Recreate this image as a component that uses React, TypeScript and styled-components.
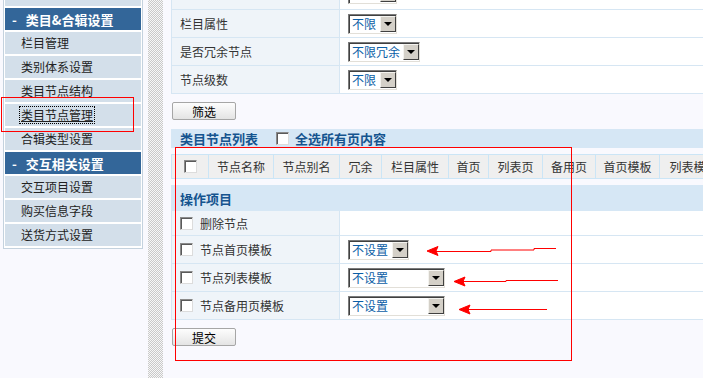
import React from 'react';
import styled, { createGlobalStyle } from 'styled-components';

const GlobalStyle = createGlobalStyle`
  html, body { margin: 0; padding: 0; }
  body {
    background: #f9f9fe;
    font-family: "Noto Sans CJK SC", "Liberation Sans", sans-serif;
    font-size: 12px;
    color: #333;
    overflow: hidden;
  }
`;

const Page = styled.div`
  position: relative;
  display: flex;
  align-items: flex-start;
  width: 703px;
  height: 378px;
  overflow: hidden;
`;

/* ---------- sidebar ---------- */

const Sidebar = styled.div`
  flex-shrink: 0;
  margin-left: 3px;
  width: 140px;
  box-sizing: border-box;
  border: 1px solid #c4d2de;
  border-top: none;
  background: #fff;
  padding: 0 1px 2px;
  display: flex;
  flex-direction: column;
  gap: 2px;
`;

const MenuStub = styled.div`
  height: 6px;
  background: #d3dfea;
`;

const MenuHeader = styled.div`
  height: 22px;
  background: #336699;
  color: #fff;
  font-weight: bold;
  font-size: 13px;
  display: flex;
  align-items: center;
  padding-left: 7px;
  span { margin-right: 9px; }
`;

const MenuItem = styled.div<{ $active?: boolean }>`
  height: 22px;
  background: #d3dfea;
  color: #222;
  display: flex;
  align-items: center;
  padding-left: 15px;
  span {
    padding: 0 1px;
    outline: ${({ $active }) => ($active ? '1px dotted #000' : 'none')};
    text-decoration: ${({ $active }) => ($active ? 'underline' : 'none')};
    line-height: 16px;
  }
`;

const Splitter = styled.div`
  flex-shrink: 0;
  margin-left: 5px;
  width: 15px;
  height: 378px;
  background-color: #fff;
  background-image: repeating-conic-gradient(#c9c9c9 0% 25%, #f7f7f7 0% 50%);
  background-size: 2px 2px;
`;

/* ---------- main ---------- */

const Main = styled.div`
  flex: 1;
  min-width: 0;
  margin-left: 8px;
  height: 378px;
  overflow: hidden;
`;

const FormRow = styled.div<{ $h: number }>`
  box-sizing: border-box;
  display: grid;
  grid-template-columns: 168px 1fr;
  height: ${({ $h }) => $h}px;
  border-left: 1px solid #d6e6f3;
  border-bottom: 1px solid #d6e6f3;
  width: 700px;
`;

const LabelCell = styled.div`
  background: #eff4f9;
  border-right: 1px solid #d6e6f3;
  display: flex;
  align-items: center;
  padding-left: 8px;
  gap: 7px;
  overflow: hidden;
`;

const ValueCell = styled.div<{ $bottom?: boolean }>`
  background: #fff;
  display: flex;
  align-items: ${({ $bottom }) => ($bottom ? 'flex-end' : 'center')};
  padding-left: 8px;
  overflow: hidden;
`;

const SelectBox = styled.div<{ $w: number; $lift?: number }>`
  flex-shrink: 0;
  box-sizing: border-box;
  width: ${({ $w }) => $w}px;
  height: 20px;
  margin-bottom: ${({ $lift }) => $lift ?? 0}px;
  display: flex;
  background: #fff;
  border: 1px solid;
  border-color: #7b7b7b #e2dfd8 #e2dfd8 #7b7b7b;
  box-shadow: inset 1px 1px 0 #404040;
`;

const SelectText = styled.div`
  flex: 1;
  color: #0b5ea6;
  padding-left: 3px;
  line-height: 18px;
  white-space: nowrap;
`;

const SelectArrow = styled.div`
  width: 16px;
  margin: 1px 0 1px 0;
  box-sizing: border-box;
  background: #d4d0c8;
  border: 1px solid;
  border-color: #f4f3ef #404040 #404040 #f4f3ef;
  display: flex;
  align-items: center;
  justify-content: center;
  &::after {
    content: '';
    border-left: 4px solid transparent;
    border-right: 4px solid transparent;
    border-top: 4px solid #000;
  }
`;

const Button = styled.div<{ $top: number; $bottom: number }>`
  margin: ${({ $top, $bottom }) => `${$top}px 0 ${$bottom}px 1px`};
  width: 64px;
  height: 18px;
  box-sizing: border-box;
  border: 1px solid #a6a6a6;
  border-radius: 2px;
  background: linear-gradient(#fdfdfd, #e4e4e4);
  color: #000;
  font-size: 12px;
  display: flex;
  align-items: center;
  justify-content: center;
`;

const Bar = styled.div<{ $h: number }>`
  height: ${({ $h }) => $h}px;
  background: #d6e7f5;
  color: #15548f;
  font-weight: bold;
  font-size: 13px;
  display: flex;
  align-items: center;
  padding-left: 9px;
  white-space: nowrap;
`;

const BarCheck = styled.span`
  display: flex;
  align-items: center;
  gap: 6px;
  margin-left: 18px;
`;

const HeaderRow = styled.div`
  margin-top: 6px;
  display: flex;
  height: 25px;
  width: max-content;
  border-left: 1px solid #cbe5f6;
`;

const HeaderCell = styled.div<{ $w: number }>`
  box-sizing: border-box;
  width: ${({ $w }) => $w}px;
  background: #efefef;
  border: 1px solid #cbe5f6;
  border-left: none;
  display: flex;
  align-items: center;
  justify-content: center;
  white-space: nowrap;
`;

const Check = styled.span`
  flex-shrink: 0;
  display: inline-block;
  box-sizing: border-box;
  width: 13px;
  height: 13px;
  background: #fff;
  border: 1px solid;
  border-color: #8a8a8a #dcdcdc #dcdcdc #8a8a8a;
  box-shadow: inset 1px 1px 0 #5a5a5a;
`;

const OpGap = styled.div`
  height: 6px;
`;

/* ---------- annotations ---------- */

const RedFrame = styled.div<{ $x: number; $y: number; $w: number; $h: number }>`
  position: absolute;
  left: ${({ $x }) => $x}px;
  top: ${({ $y }) => $y}px;
  width: ${({ $w }) => $w}px;
  height: ${({ $h }) => $h}px;
  border: 1px solid #ff0000;
  pointer-events: none;
`;

const Overlay = styled.svg`
  position: absolute;
  left: 0;
  top: 0;
  pointer-events: none;
`;

const Select = ({ label, w, lift }: { label: string; w: number; lift?: number }) => (
  <SelectBox $w={w} $lift={lift}>
    <SelectText>{label}</SelectText>
    <SelectArrow />
  </SelectBox>
);

const columns: [string, number][] = [
  ['', 37],
  ['节点名称', 65],
  ['节点别名', 66],
  ['冗余', 42],
  ['栏目属性', 67],
  ['首页', 40],
  ['列表页', 54],
  ['备用页', 53],
  ['首页模板', 64],
  ['列表模板', 68],
  ['备用模板', 68],
  ['排序', 40],
];

export default function App() {
  return (
    <>
      <GlobalStyle />
      <Page>
        <Sidebar>
          <MenuStub />
          <MenuHeader><span>-</span>类目&amp;合辑设置</MenuHeader>
          <MenuItem><span>栏目管理</span></MenuItem>
          <MenuItem><span>类别体系设置</span></MenuItem>
          <MenuItem><span>类目节点结构</span></MenuItem>
          <MenuItem $active><span>类目节点管理</span></MenuItem>
          <MenuItem><span>合辑类型设置</span></MenuItem>
          <MenuHeader><span>-</span>交互相关设置</MenuHeader>
          <MenuItem><span>交互项目设置</span></MenuItem>
          <MenuItem><span>购买信息字段</span></MenuItem>
          <MenuItem><span>送货方式设置</span></MenuItem>
        </Sidebar>

        <Splitter />

        <Main>
          <FormRow $h={10}>
            <LabelCell />
            <ValueCell $bottom>
              <Select label="不限" w={49} lift={5} />
            </ValueCell>
          </FormRow>
          <FormRow $h={28}>
            <LabelCell>栏目属性</LabelCell>
            <ValueCell><Select label="不限" w={49} /></ValueCell>
          </FormRow>
          <FormRow $h={28}>
            <LabelCell>是否冗余节点</LabelCell>
            <ValueCell><Select label="不限冗余" w={72} /></ValueCell>
          </FormRow>
          <FormRow $h={28}>
            <LabelCell>节点级数</LabelCell>
            <ValueCell><Select label="不限" w={49} /></ValueCell>
          </FormRow>

          <Button $top={8} $bottom={9}>筛选</Button>

          <Bar $h={19}>
            类目节点列表
            <BarCheck><Check />全选所有页内容</BarCheck>
          </Bar>

          <HeaderRow>
            {columns.map(([title, w], i) => (
              <HeaderCell key={i} $w={w}>{i === 0 ? <Check /> : title}</HeaderCell>
            ))}
          </HeaderRow>

          <OpGap />
          <Bar $h={26}>操作项目</Bar>

          <FormRow $h={25}>
            <LabelCell><Check />删除节点</LabelCell>
            <ValueCell />
          </FormRow>
          <FormRow $h={28}>
            <LabelCell><Check />节点首页模板</LabelCell>
            <ValueCell><Select label="不设置" w={61} /></ValueCell>
          </FormRow>
          <FormRow $h={28}>
            <LabelCell><Check />节点列表模板</LabelCell>
            <ValueCell><Select label="不设置" w={97} /></ValueCell>
          </FormRow>
          <FormRow $h={28}>
            <LabelCell><Check />节点备用页模板</LabelCell>
            <ValueCell><Select label="不设置" w={97} /></ValueCell>
          </FormRow>

          <Button $top={8} $bottom={0}>提交</Button>
        </Main>

        <RedFrame $x={1} $y={97} $w={131} $h={33} />
        <RedFrame $x={175} $y={147} $w={395} $h={212} />

        <Overlay width="703" height="378" viewBox="0 0 703 378">
          <g fill="#ff0000" stroke="#ff0000" strokeWidth="1">
            <polygon points="427,251 438,246.5 436,251 438,255.5" />
            <polyline fill="none" points="436,251.5 491,251.5 491,250 534,250 534,248.5 556,248.5" />
            <polygon points="454,281.5 465,277 463,281.5 465,286" />
            <polyline fill="none" points="463,281.5 506,281.5 506,280.5 558,280.5" />
            <polygon points="459,309.5 470,305 468,309.5 470,314" />
            <polyline fill="none" points="468,309.5 547,309.5" />
          </g>
        </Overlay>
      </Page>
    </>
  );
}
